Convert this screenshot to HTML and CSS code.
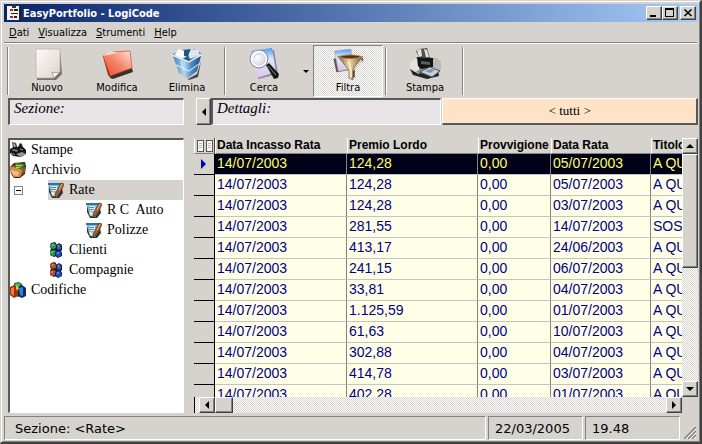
FILE: index.html
```html
<!DOCTYPE html>
<html lang="it">
<head>
    <meta charset="UTF-8">
    <meta name="viewport" content="width=device-width, initial-scale=1.0">
    <title>EasyPortfolio - LogiCode</title>
    <link rel="stylesheet" href="styles.css">
</head>
<body>
    <!-- shared drawings for the tree -->
    <svg class="defs" width="0" height="0" aria-hidden="true">
        <defs>
            <linearGradient id="gPage" x1="0" y1="0" x2="1" y2="1">
                <stop offset="0" stop-color="#fdfaf8"/><stop offset="1" stop-color="#ddd3cf"/>
            </linearGradient>
            <linearGradient id="gRed" x1="0" y1="1" x2="1" y2="0">
                <stop offset="0" stop-color="#e8502c"/><stop offset=".5" stop-color="#f58468"/><stop offset="1" stop-color="#fde6dc"/>
            </linearGradient>
            <linearGradient id="gBin" x1="0" y1="0" x2="1" y2="0">
                <stop offset="0" stop-color="#3f78b4"/><stop offset=".4" stop-color="#b4d8f0"/><stop offset=".65" stop-color="#4e8cc8"/><stop offset="1" stop-color="#1d4c86"/>
            </linearGradient>
            <linearGradient id="gDoc" x1="0" y1="0" x2="0" y2="1">
                <stop offset="0" stop-color="#4a9af0"/><stop offset=".35" stop-color="#d8e8fc"/><stop offset="1" stop-color="#e2c4ec"/>
            </linearGradient>
            <radialGradient id="gLens" cx=".4" cy=".4" r=".6">
                <stop offset="0" stop-color="#ffffff"/><stop offset=".7" stop-color="#dcdcec"/><stop offset="1" stop-color="#b8b4cc"/>
            </radialGradient>
            <linearGradient id="gFunnel" x1="0" y1="0" x2="1" y2="0">
                <stop offset="0" stop-color="#8a5e30"/><stop offset=".45" stop-color="#f0d8a8"/><stop offset="1" stop-color="#80582c"/>
            </linearGradient>
            <symbol id="icoNote" viewBox="0 0 16 16">
                <path d="M1 2h12l2 9-4 5H4L1 10z" fill="#2c3438"/>
                <path d="M0 1h12l1 8-4 6-5-1z" fill="#8cb8d8"/>
                <path d="M0 1h13v2H0z" fill="#2474b4"/>
                <path d="M3 4h6v5H4z" fill="#d4ecf8"/>
                <path d="M3 5.500h5M3 7.500h5" stroke="#6088a8"/>
                <path d="M3 10l6 1-2 3-3-1z" fill="#e4f0d8"/>
                <path d="M13 1l3 1-2 5-4 6-3 2v-3z" fill="#a8602c" stroke="#3c2410" stroke-width=".6"/>
                <path d="M14 2l-3 6" stroke="#f0b478"/>
            </symbol>
            <symbol id="icoPrint" viewBox="0 0 16 16">
                <path d="M2 0l4 1 2 6-5-1z" fill="#444"/>
                <path d="M3 1l2 1 1 4-2-1z" fill="#aaa"/>
                <path d="M8 5l2-4 2 1 1 4z" fill="#222"/>
                <path d="M0 7l4-2 9 0 3 3v4l-5 3-8-1-3-3z" fill="#151515"/>
                <path d="M1 8l3-1 4 1-1 2z" fill="#777"/>
                <path d="M6 12l6-2 4 2-5 3z" fill="#9498a0"/>
                <path d="M1 11l4 2M10 7l3 1" stroke="#999"/>
            </symbol>
            <symbol id="icoArchive" viewBox="0 0 16 16">
                <path d="M0 5l4-4 11-1 1 4-1 8-5 4H4l-3-4z" fill="#3c2412"/>
                <path d="M0 5l4-1 9 2 1 2-4 7H4l-3-4z" fill="#d88c4c"/>
                <path d="M3 5l3-4 9 1-3 6z" fill="#3c8428"/>
                <path d="M6 3l2 1 2-1 2 1M6 5l2 1 2-1" stroke="#e8dc50" fill="none"/>
                <path d="M1 8l8 2-1 4-5-1z" fill="#f4bc84"/>
                <path d="M12 8l3-4v6l-4 4z" fill="#905028"/>
            </symbol>
            <symbol id="icoBooks" viewBox="0 0 16 16">
                <path d="M4 1l5-1 3 2v11l-4 2-3-2z" fill="#1c6c34"/>
                <path d="M5 2l5-1v5L6 7z" fill="#48b868"/>
                <path d="M0 5l4-2 3 2 1 9-4 2-4-3z" fill="#a82c10"/>
                <path d="M1 6l3-1v9l-3-2z" fill="#f08030"/>
                <path d="M8 5l4-2 4 3v8l-4 2-4-2z" fill="#0c2c5c"/>
                <path d="M9 6l4-1v9l-3-1z" fill="#3484cc"/>
                <path d="M6 3l3 3-2 3-1-3z" fill="#f0d040"/>
            </symbol>
            <symbol id="icoPeople" viewBox="0 0 16 16">
                <path d="M3 1l4-1 2 3v4l1 2v4l-4 2-4-2V9l1-2-1-3z" fill="#1c1c20"/>
                <path d="M2 2l4-1 2 2v3L5 7 2 6zM2 9l4-1 2 1v4l-3 1-3-1z" class="who"/>
                <path d="M8 3l3-2 3 2v5l-1 1 1 2v3l-4 2-3-2v-3l1-2z" fill="#141c38"/>
                <path d="M9 3l2-1 2 2v3l-3 1-1-2z" fill="#2c60b8"/>
                <path d="M8 10l3-1 2 1v4l-3 1-2-1z" fill="#1c48d0"/>
                <path d="M4 3h2M3 10h2M10 4h1M9 11h2" stroke="#fff" stroke-opacity=".6"/>
            </symbol>
        </defs>
    </svg>

    <div class="window">
        <header class="titlebar">
            <svg class="app-icon" viewBox="0 0 16 16" shape-rendering="crispEdges">
                <path d="M2 2h13v13H2z" fill="#222"/>
                <path d="M1 1h12v14H1z" fill="#f4f0f0"/>
                <path d="M6 0h4v3H6z" fill="#333"/>
                <path d="M4 4h3v2H4zM4 11h3v2H4z" fill="#a02828"/>
                <path d="M8 4h4v2H8zM5 8h7v1H5zM8 11h3v2H8z" fill="#222"/>
            </svg>
            <h1>EasyPortfolio - LogiCode</h1>
            <div class="win-buttons">
                <button type="button" aria-label="Riduci a icona"><svg viewBox="0 0 12 10"><path d="M2 7h6v2H2z"/></svg></button>
                <button type="button" aria-label="Ingrandisci"><svg viewBox="0 0 12 10"><path d="M1 0h9v9H1zM2 2v6h7V2z" fill-rule="evenodd"/></svg></button>
                <button type="button" class="close" aria-label="Chiudi"><svg viewBox="0 0 12 10"><path d="M2.500 1.500l7 6.500M9.500 1.500l-7 6.500" stroke="#000" stroke-width="1.600"/></svg></button>
            </div>
        </header>

        <nav class="menubar">
            <button type="button"><u>D</u>ati</button>
            <button type="button"><u>V</u>isualizza</button>
            <button type="button"><u>S</u>trumenti</button>
            <button type="button"><u>H</u>elp</button>
        </nav>

        <div class="toolbar">
            <span class="sep"></span>
            <button type="button" class="tool">
                <svg viewBox="0 0 32 32">
                    <path d="M6 2h23l2 24-6 6H6z" fill="#77716e"/>
                    <path d="M5 1h24v23l-6 6H5z" fill="url(#gPage)" stroke="#b8aeaa" stroke-width=".7"/>
                    <path d="M29 24l-6 6-2-6 4 1z" fill="#fff" stroke="#8a807c" stroke-width=".7"/>
                </svg>
                Nuovo
            </button>
            <button type="button" class="tool">
                <svg viewBox="0 0 32 32">
                    <path d="M4 10l5 20 3 1 20-7-1-4z" fill="#3c302c"/>
                    <path d="M2 8l7-4 20-1 2 17-22 8z" fill="url(#gRed)" stroke="#d04428" stroke-width=".7"/>
                    <path d="M2 8l7-5 6 1 1 1z" fill="#f8dcd0"/>
                    <path d="M2 8l7 19v2L7 27z" fill="#9c2c14"/>
                </svg>
                Modifica
            </button>
            <button type="button" class="tool">
                <svg viewBox="0 0 32 32">
                    <path d="M8 24l9 7 9-5 4-13-3 16-9 3z" fill="#444"/>
                    <path d="M2 8l6 17 9 5 9-7 4-15-12 6z" fill="url(#gBin)"/>
                    <path d="M1 7l8-5 14-1 8 5-12 8z" fill="#345878"/>
                    <path d="M3 7l5-6 6 2 3 5-6 3z" fill="#f6fafc"/>
                    <path d="M17 7l3-6 7 1 2 5-10 4z" fill="#dce8f0"/>
                    <path d="M13 3l6-2-2 8-4-1z" fill="#15568c"/>
                    <path d="M1 7l17 7L31 6" fill="none" stroke="#dceefa" stroke-width="1.500"/>
                    <path d="M5 17l13 6 10-7M10 13l3 10" fill="none" stroke="#e0f4ff" stroke-opacity=".7" stroke-width="1.500"/>
                </svg>
                Elimina
            </button>
            <span class="sep"></span>
            <button type="button" class="tool">
                <svg viewBox="0 0 32 32">
                    <path d="M8 5l18-3 4 24-20 5z" fill="#8c88a0"/>
                    <path d="M3 3l21-3 4 24-19 6z" fill="url(#gDoc)"/>
                    <path d="M18 17l3-2 10 11-1 4-4 1z" fill="#181818"/>
                    <path d="M20 18l8 9" stroke="#888"/>
                    <circle cx="11" cy="11" r="9" fill="url(#gLens)" stroke="#8c88a0"/>
                    <circle cx="11" cy="11" r="7.500" fill="none" stroke="#fff" stroke-width="1.500"/>
                    <path d="M6 10q2-5 7-4" fill="none" stroke="#c8c8dc"/>
                </svg>
                Cerca
            </button>
            <button type="button" class="drop" aria-label="Opzioni di ricerca"></button>
            <button type="button" class="tool pressed" aria-pressed="true">
                <svg viewBox="0 0 32 32">
                    <path d="M1 10l3 14 12-2-3-14z" fill="#6c5040"/>
                    <path d="M2 2l17-2 3 20-16 3z" fill="url(#gDoc)" stroke="#9c98b4" stroke-width=".5"/>
                    <path d="M30 8v5l-9 10-1 8 3-2V21l9-10z" fill="#50483c"/>
                    <path d="M6 8l11 14v8l4 2V21L31 8z" fill="url(#gFunnel)" stroke="#5c3c1c" stroke-width=".6"/>
                    <path d="M5 8q14-4 26 0-12 4-26 0z" fill="#4c3420" stroke="#b88c54"/>
                    <path d="M17 13l2 8v8" fill="none" stroke="#fff0cc" stroke-width="1.500"/>
                </svg>
                Filtra
            </button>
            <span class="sep"></span>
            <button type="button" class="tool">
                <svg viewBox="0 0 32 32">
                    <path d="M1 21l7-4 21 5 1 6-12 3-14-4z" fill="#222"/>
                    <path d="M2 13l6-4 17 1 6 4v9l-7 4-15-2-7-4z" fill="#888c88"/>
                    <path d="M1 14l5-4 4 1v11l-4 2-5-3z" fill="#dfe4e0"/>
                    <path d="M23 11l5-1 4 4v8l-5 1-4-3z" fill="#b8bcb8"/>
                    <path d="M8 9l16 1v9l-12 2-3-3z" fill="#141414"/>
                    <path d="M7 3l3-2 8-1 3 10-11-1z" fill="#50544e"/>
                    <path d="M8 2l4-1 1 7-3 1zM15 1l3 1 2 7h-3z" fill="#e4e4e0"/>
                    <path d="M12 13l9 1v3l-9-1z" fill="#586060"/>
                    <path d="M11 24l10-5 10 4-8 6z" fill="#c4d0dc" stroke="#505860"/>
                    <path d="M16 23l6-2 4 1-5 3z" fill="#7c94ac"/>
                    <path d="M4 22l6 4" fill="none" stroke="#ccc"/>
                </svg>
                Stampa
            </button>
            <span class="sep"></span>
        </div>

        <div class="filters">
            <div class="caption caption-section">Sezione:</div>
            <button type="button" class="collapse" aria-label="Nascondi sezione"><span class="arrow left"></span></button>
            <div class="caption caption-details">Dettagli:</div>
            <button type="button" class="all">&lt; tutti &gt;</button>
        </div>

        <main class="content">
            <ul class="tree">
                <li><div class="node"><svg><use href="#icoPrint"/></svg>Stampe</div></li>
                <li><div class="node"><svg><use href="#icoArchive"/></svg>Archivio</div>
                    <ul>
                        <li class="open"><button type="button" class="toggle" aria-label="Comprimi"></button><div class="node selected"><svg><use href="#icoNote"/></svg>Rate</div>
                            <ul>
                                <li><div class="node"><svg><use href="#icoNote"/></svg>R C  Auto</div></li>
                                <li><div class="node"><svg><use href="#icoNote"/></svg>Polizze</div></li>
                            </ul>
                        </li>
                        <li><div class="node"><svg class="green"><use href="#icoPeople"/></svg>Clienti</div></li>
                        <li><div class="node"><svg class="red"><use href="#icoPeople"/></svg>Compagnie</div></li>
                    </ul>
                </li>
                <li><div class="node"><svg><use href="#icoBooks"/></svg>Codifiche</div></li>
            </ul>

            <section class="grid">
                <div class="table-wrap">
                    <table>
                        <colgroup>
                            <col class="c-mark"><col class="c-cash"><col class="c-prize"><col class="c-fee"><col class="c-date"><col class="c-title">
                        </colgroup>
                        <thead>
                            <tr>
                                <th class="corner"><svg viewBox="0 0 16 12" shape-rendering="crispEdges"><path d="M0 0h7v11H0zM9 0h7v11H9z" fill="#f8f8f4"/><path d="M0 0h7v1H0zM9 0h7v1H9zM0 0h1v11H0zM6 0h1v11H6zM9 0h1v11H9zM15 0h1v11h-1zM0 11h7v1H0zM9 11h7v1H9z" fill="#555"/><path d="M2 3h3v1H2zM2 5h3v1H2zM2 7h3v1H2zM11 3h3v1h-3zM11 5h3v1h-3zM11 7h3v1h-3z" fill="#bbb"/></svg></th>
                                <th>Data Incasso Rata</th>
                                <th>Premio Lordo</th>
                                <th>Provvigione</th>
                                <th>Data Rata</th>
                                <th>Titolo</th>
                            </tr>
                        </thead>
                        <tbody>
                            <tr class="current"><td><span class="arrow right"></span></td><td>14/07/2003</td><td>124,28</td><td>0,00</td><td>05/07/2003</td><td>A QU</td></tr>
                            <tr><td></td><td>14/07/2003</td><td>124,28</td><td>0,00</td><td>05/07/2003</td><td>A QU</td></tr>
                            <tr><td></td><td>14/07/2003</td><td>124,28</td><td>0,00</td><td>03/07/2003</td><td>A QU</td></tr>
                            <tr><td></td><td>14/07/2003</td><td>281,55</td><td>0,00</td><td>14/07/2003</td><td>SOS</td></tr>
                            <tr><td></td><td>14/07/2003</td><td>413,17</td><td>0,00</td><td>24/06/2003</td><td>A QU</td></tr>
                            <tr><td></td><td>14/07/2003</td><td>241,15</td><td>0,00</td><td>06/07/2003</td><td>A QU</td></tr>
                            <tr><td></td><td>14/07/2003</td><td>33,81</td><td>0,00</td><td>04/07/2003</td><td>A QU</td></tr>
                            <tr><td></td><td>14/07/2003</td><td>1.125,59</td><td>0,00</td><td>01/07/2003</td><td>A QU</td></tr>
                            <tr><td></td><td>14/07/2003</td><td>61,63</td><td>0,00</td><td>10/07/2003</td><td>A QU</td></tr>
                            <tr><td></td><td>14/07/2003</td><td>302,88</td><td>0,00</td><td>04/07/2003</td><td>A QU</td></tr>
                            <tr><td></td><td>14/07/2003</td><td>414,78</td><td>0,00</td><td>03/07/2003</td><td>A QU</td></tr>
                            <tr><td></td><td>14/07/2003</td><td>402,28</td><td>0,00</td><td>01/07/2003</td><td>A QU</td></tr>
                        </tbody>
                    </table>
                </div>
                <div class="vscroll">
                    <button type="button" aria-label="Su"><span class="arrow up"></span></button>
                    <div class="thumb"></div>
                    <button type="button" class="end" aria-label="Gi&ugrave;"><span class="arrow down"></span></button>
                </div>
                <div class="hscroll">
                    <button type="button" aria-label="Sinistra"><span class="arrow left"></span></button>
                    <div class="thumb"></div>
                    <button type="button" class="end" aria-label="Destra"><span class="arrow right"></span></button>
                </div>
            </section>
        </main>

        <footer class="statusbar">
            <div class="cell cell-section">Sezione: &lt;Rate&gt;</div>
            <div class="cell">22/03/2005</div>
            <div class="cell">19.48</div>
            <svg class="grip" viewBox="0 0 12 12"><path d="M0 12L12 0M4 12l8-8M8 12l4-4" stroke="#808080" stroke-width="1.500"/><path d="M2 12L12 2M6 12l6-6M10 12l2-2" stroke="#fff"/></svg>
        </footer>
    </div>
</body>
</html>
```

FILE: styles.css
```css
* {
    box-sizing: border-box;
}

body {
    margin: 0;
    background: #d6d3ce;
    color: #000;
    font-family: "DejaVu Sans Condensed", "DejaVu Sans", sans-serif;
    font-size: 11px;
}

button {
    margin: 0;
    padding: 0;
    border: none;
    background: none;
    color: inherit;
    font: inherit;
}

.defs {
    position: absolute;
}

.window {
    display: flex;
    flex-direction: column;
    height: 100vh;
    padding: 3px 2px 2px 1px;
    border: 1px solid #d6d3ce;
    border-right: 2px solid #424142;
    border-bottom: 2px solid #424142;
    box-shadow: inset 1px 1px #fff, inset -1px -1px #848284;
    background: #d6d3ce;
}

/* title bar */
.titlebar {
    display: flex;
    align-items: center;
    height: 18px;
    margin: 0 0 0 2px;
    padding: 0 2px;
    background: linear-gradient(to right, #08246b, #a5cbf7);
    color: #fff;
}

.app-icon {
    width: 16px;
    height: 16px;
}

.titlebar h1 {
    flex: 1;
    margin: 0 0 0 1px;
    font-size: 11px;
    font-weight: bold;
}

.win-buttons {
    display: flex;
}

.win-buttons button,
.collapse,
.vscroll button,
.hscroll button,
.thumb {
    border: 1px solid #fff;
    border-right-color: #424142;
    border-bottom-color: #424142;
    box-shadow: inset -1px -1px #848284;
    background: #d6d3ce;
}

.win-buttons button {
    width: 16px;
    height: 14px;
}

.win-buttons svg {
    display: block;
    width: 12px;
    height: 10px;
    margin: 1px;
}

.win-buttons .close {
    margin-left: 2px;
}

/* menu */
.menubar {
    display: flex;
    gap: 9px;
    height: 21px;
    margin: 0 1px 0 2px;
    padding: 1px 5px 0;
    border-bottom: 1px solid #848284;
}

/* toolbar */
.toolbar {
    display: flex;
    align-items: center;
    height: 55px;
    margin: 0 1px 0 2px;
    padding: 0 3px;
    border-top: 1px solid #fff;
}

.sep {
    width: 2px;
    height: 48px;
    margin: 0 3px 0 2px;
    border-left: 1px solid #848284;
    border-right: 1px solid #fff;
}

.sep:first-child {
    margin-left: 0;
}

.tool {
    display: flex;
    flex-direction: column;
    align-items: center;
    width: 70px;
    height: 52px;
    padding-top: 3px;
    line-height: 16px;
}

.tool svg {
    width: 32px;
    height: 32px;
}

.pressed {
    border: 1px solid #848284;
    border-right-color: #fff;
    border-bottom-color: #fff;
    background: repeating-conic-gradient(#fff 0 25%, #d6d3ce 0 50%) 0 0 / 2px 2px;
}

.drop {
    width: 14px;
    height: 52px;
}

.drop::before {
    content: "";
    display: block;
    margin: 0 auto;
    width: 0;
    border: 3px solid transparent;
    border-top-color: #000;
    border-bottom: none;
}

/* caption strip */
.filters {
    display: flex;
    height: 27px;
    margin: 0 0 0 6px;
    font-family: "Liberation Serif", serif;
}

.caption {
    padding: 0 4px;
    border: 1px solid #fff;
    border-top: 2px solid #5a595a;
    border-left: 2px solid #5a595a;
    background: #e7e3e7;
    font-size: 15px;
    font-style: italic;
    line-height: 17px;
}

.caption-section {
    width: 176px;
    margin-right: 12px;
}

.collapse {
    width: 15px;
}

.caption-details {
    flex: 219;
}

.all {
    flex: 252;
    margin-left: 1px;
    border: 1px solid #fff;
    border-right: 2px solid #5a595a;
    border-bottom: 2px solid #5a595a;
    background: #ffe3c6;
    font-size: 13px;
}

.arrow {
    display: block;
    width: 0;
    height: 0;
    margin: auto;
    border: 4px solid transparent;
}

.arrow.left {
    border-right-color: #000;
    border-left: none;
}

.arrow.right {
    border-left-color: #000;
    border-right: none;
}

.arrow.up {
    border-bottom-color: #000;
    border-top: none;
}

.arrow.down {
    border-top-color: #000;
    border-bottom: none;
}

/* tree and grid */
.content {
    display: flex;
    flex: 1;
    gap: 10px;
    min-height: 0;
    margin: 13px 0 3px 6px;
}

.tree {
    flex: none;
    width: 176px;
    border: 1px solid #fff;
    border-top: 2px solid #5a595a;
    border-left: 2px solid #5a595a;
    background: #fff;
    font-family: "Liberation Serif", serif;
    font-size: 14px;
    line-height: 20px;
}

.tree,
.tree ul {
    margin: 0;
    padding: 0;
    list-style: none;
}

.tree ul {
    padding-left: 38px;
}

.open {
    position: relative;
}

.toggle {
    position: absolute;
    top: 6px;
    left: -34px;
    width: 9px;
    height: 9px;
    border: 1px solid #848284;
    background: linear-gradient(#000, #000) center / 5px 1px no-repeat #fff;
}

.node {
    display: flex;
    align-items: center;
    gap: 5px;
    height: 20px;
    white-space: pre;
}

.node svg {
    width: 16px;
    height: 16px;
}

.selected {
    background: #d6d3ce;
}

.green {
    fill: #289850;
}

.red {
    fill: #b04c28;
}

.grid {
    display: grid;
    flex: 1;
    grid-template-columns: 1fr 16px;
    grid-template-rows: 1fr 16px;
    min-width: 0;
}

.table-wrap {
    overflow: hidden;
    min-height: 0;
    font-family: "Liberation Sans", sans-serif;
}

table {
    width: 580px;
    table-layout: fixed;
    border-collapse: separate;
    border-spacing: 0;
}

.c-mark {
    width: 21px;
}

.c-cash {
    width: 132px;
}

.c-prize {
    width: 131px;
}

.c-fee {
    width: 73px;
}

.c-date {
    width: 100px;
}

th {
    height: 16px;
    padding: 0 0 0 1px;
    border-left: 1px solid #fff;
    border-bottom: 1px solid #848284;
    background: #d6d3ce;
    font-size: 12px;
    line-height: 15px;
    text-align: left;
    white-space: nowrap;
}

.corner {
    border-right: 1px solid #424142;
}

.corner svg {
    display: block;
    width: 16px;
    height: 12px;
    margin-left: 1px;
}

td {
    height: 21px;
    padding: 0 2px 2px;
    border-right: 1px solid #848284;
    border-bottom: 1px solid #c6c3c6;
    background: #ffffe7;
    color: #000084;
    font-size: 14px;
    line-height: 18px;
    white-space: nowrap;
}

td:first-child {
    padding: 0;
    border-right: 1px solid #000;
    border-bottom: 1px solid #000;
    background: #d6d3ce;
}

.current td:not(:first-child) {
    background: #000018;
    color: #ffff6b;
}

td .arrow.right {
    margin-left: 7px;
    border-width: 5px;
    border-right: none;
    border-left-color: #0000b5;
}

.vscroll,
.hscroll {
    display: flex;
    background: repeating-conic-gradient(#fff 0 25%, #d6d3ce 0 50%) 0 0 / 2px 2px;
}

.vscroll {
    flex-direction: column;
}

.vscroll button,
.hscroll button {
    flex: none;
    width: 16px;
    height: 16px;
}

.vscroll .thumb {
    height: 114px;
}

.hscroll {
    padding-left: 4px;
    border-left: 1px solid #000;
}

.hscroll .thumb {
    width: 18px;
}

.vscroll .end {
    margin-top: auto;
}

.hscroll .end {
    margin-left: auto;
}

/* status bar */
.statusbar {
    display: flex;
    gap: 2px;
    height: 24px;
    margin: 0 1px 0 2px;
    font-family: "DejaVu Sans", sans-serif;
    font-size: 13px;
    line-height: 23px;
}

.cell {
    width: 95px;
    padding: 0 6px;
    border: 1px solid #848284;
    border-right-color: #fff;
    border-bottom-color: #fff;
    white-space: nowrap;
}

.cell-section {
    flex: 1;
    padding: 0 10px;
}

.grip {
    align-self: flex-end;
    width: 12px;
    height: 12px;
    margin: 0 1px 1px 2px;
}
```
